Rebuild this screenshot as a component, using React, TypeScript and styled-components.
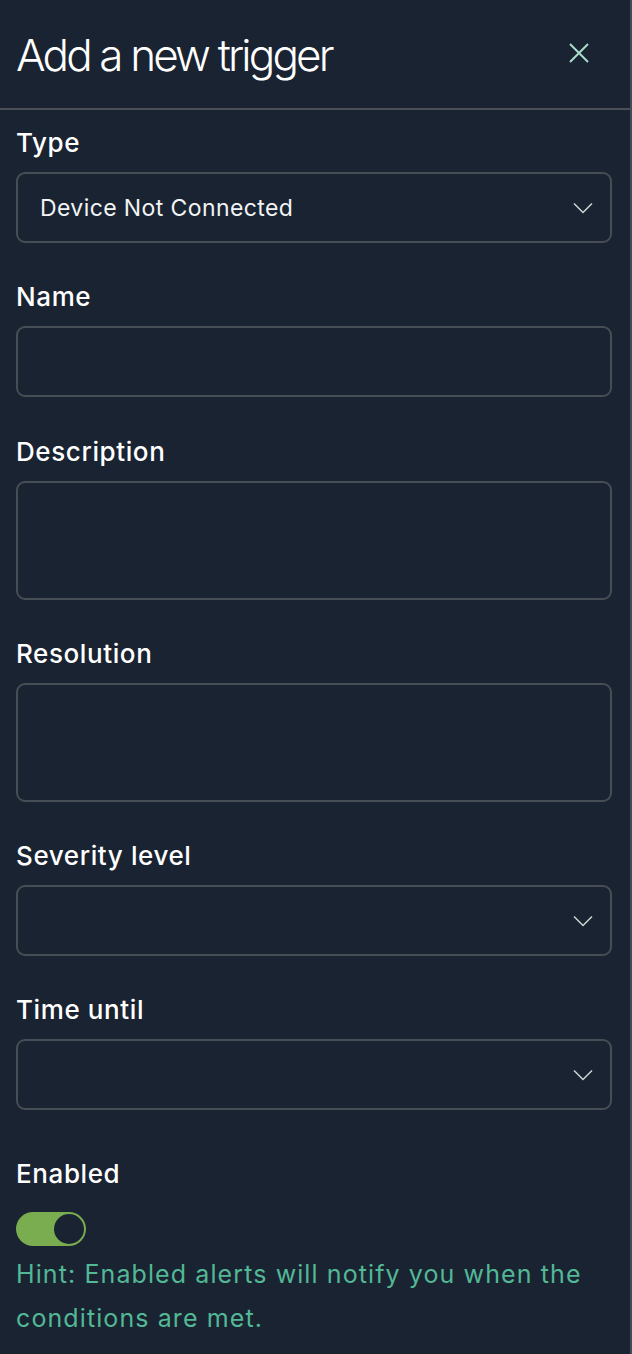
import { FC } from "react";
import styled, { createGlobalStyle } from "styled-components";

const GlobalStyle = createGlobalStyle`
  html, body {
    margin: 0;
    padding: 0;
    background: #1a2331;
  }
  body {
    font-family: Inter, "Noto Sans", sans-serif;
    -webkit-font-smoothing: antialiased;
  }
`;

const ChevronDown: FC = () => (
  <svg width="20" height="12" viewBox="0 0 20 12" fill="none">
    <path d="M1 1.5l9 9 9-9" stroke="#cbd8d4" strokeWidth="1.5" />
  </svg>
);

const CloseIcon: FC = () => (
  <svg width="22" height="22" viewBox="0 0 22 22" fill="none">
    <path d="M2 2l18 18M20 2L2 20" stroke="#a9dccb" strokeWidth="2" />
  </svg>
);

interface FieldProps {
  label: string;
  kind: "select" | "input" | "textarea";
  value?: string;
}

const Field: FC<FieldProps> = ({ label, kind, value }) => (
  <FieldBox>
    <Label>{label}</Label>
    <InputBox $tall={kind === "textarea"}>
      <Value>{value}</Value>
      {kind === "select" && <ChevronDown />}
    </InputBox>
  </FieldBox>
);

const App: FC = () => {
  return (
    <>
      <GlobalStyle />
      <Panel>
        <Header>
          <Title>Add a new trigger</Title>
          <CloseButton>
            <CloseIcon />
          </CloseButton>
        </Header>
        <Form>
          <Field label="Type" kind="select" value="Device Not Connected" />
          <Field label="Name" kind="input" />
          <Field label="Description" kind="textarea" />
          <Field label="Resolution" kind="textarea" />
          <Field label="Severity level" kind="select" />
          <Field label="Time until" kind="select" />
          <ToggleField>
            <Label>Enabled</Label>
            <Toggle>
              <Knob />
            </Toggle>
            <Hint>Hint: Enabled alerts will notify you when the conditions are met.</Hint>
          </ToggleField>
        </Form>
      </Panel>
    </>
  );
};

const Panel = styled.div`
  width: 632px;
  min-height: 1354px;
  box-sizing: border-box;
  border-right: 2px solid #464c53;
  background: #1a2331;
  color: #ffffff;
`;

const Header = styled.div`
  height: 108px;
  display: flex;
  align-items: center;
  justify-content: space-between;
  padding: 0 40px 0 16px;
  border-bottom: 2px solid #4a4f55;
`;

const Title = styled.h1`
  margin: 0;
  margin-top: 2px;
  font-size: 44px;
  font-weight: 300;
  letter-spacing: -2.85px;
  color: #ffffff;
`;

const CloseButton = styled.div`
  display: flex;
  margin-top: -2px;
`;

const Form = styled.div`
  display: flex;
  flex-direction: column;
  padding: 17px 18px 0 16px;
`;

const FieldBox = styled.div`
  display: flex;
  flex-direction: column;
  gap: 13px;
  margin-bottom: 38.3px;
`;

const Label = styled.div`
  font-size: 26px;
  font-weight: 500;
  line-height: 32px;
  letter-spacing: 0.6px;
  color: #ffffff;
`;

const InputBox = styled.div<{ $tall: boolean }>`
  height: ${(props) => (props.$tall ? "119px" : "71px")};
  box-sizing: border-box;
  border: 2px solid #474d55;
  border-radius: 9px;
  display: flex;
  align-items: ${(props) => (props.$tall ? "flex-start" : "center")};
  justify-content: space-between;
  padding: 0 17px 0 22px;
`;

const Value = styled.span`
  font-size: 23px;
  letter-spacing: 0.4px;
  color: #f2f4f5;
`;

const ToggleField = styled.div`
  display: flex;
  flex-direction: column;
  align-items: flex-start;
  margin-top: 9px;
`;

const Toggle = styled.div`
  margin-top: 22px;
  width: 70px;
  height: 34px;
  box-sizing: border-box;
  border-radius: 17px;
  background: #7aac50;
  display: flex;
  justify-content: flex-end;
  align-items: center;
  padding-right: 2px;
`;

const Knob = styled.div`
  width: 30px;
  height: 30px;
  border-radius: 50%;
  background: #1a2331;
`;

const Hint = styled.p`
  margin: 6px 0 0;
  font-size: 25px;
  line-height: 44px;
  letter-spacing: 1.1px;
  color: #52b896;
`;

export default App;
